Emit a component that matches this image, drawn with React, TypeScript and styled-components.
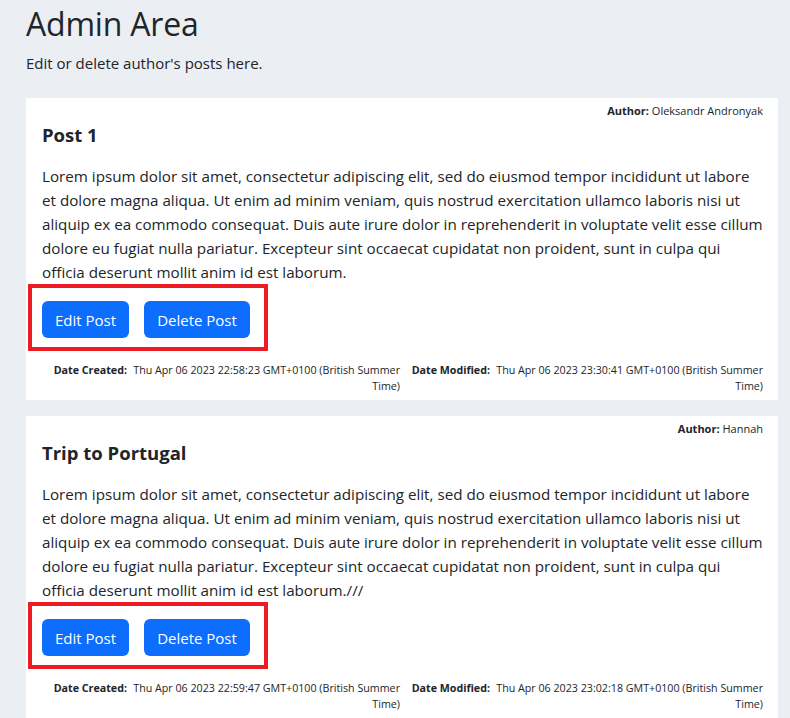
import React from "react";
import styled, { createGlobalStyle } from "styled-components";

const GlobalStyle = createGlobalStyle`
  html, body { margin: 0; padding: 0; }
  body {
    background: #ebeef3;
    font-family: "Segoe UI", "Open Sans", "Noto Sans", sans-serif;
    color: #212529;
  }
`;

const Page = styled.main`
  padding: 0 12px 20px 26px;
`;

const Title = styled.h1`
  margin: 0;
  padding-top: 4px;
  font-size: 32px;
  font-weight: 500;
  line-height: 40px;
  letter-spacing: -0.2px;
`;

const Subtitle = styled.p`
  margin: 7px 0 23px;
  font-size: 15px;
  line-height: 24px;
`;

const Card = styled.section`
  background: #fff;
  padding: 4px 15px 6px 16px;
  margin-bottom: 16px;
`;

const Author = styled.div`
  text-align: right;
  font-size: 11px;
  line-height: 18px;
  color: #212529;
  b { font-weight: 700; }
`;

const PostTitle = styled.h5`
  margin: 3px 0 17px;
  font-size: 18.5px;
  font-weight: 700;
  line-height: 24px;
`;

const Body = styled.p`
  margin: 0 -3px 0 0;
  font-size: 15.2px;
  line-height: 24px;
`;

const ButtonRow = styled.div`
  position: relative;
  display: flex;
  gap: 15px;
  margin-top: 17px;
  &::after {
    content: "";
    position: absolute;
    left: -14px;
    top: -17px;
    width: 240px;
    height: 67px;
    border: 4px solid #ed1c24;
    box-sizing: border-box;
    pointer-events: none;
  }
`;

const Button = styled.button<{ $w: number }>`
  width: ${(p) => p.$w}px;
  height: 37px;
  border: none;
  border-radius: 6px;
  background: #0d6efd;
  color: #fff;
  font-family: inherit;
  font-size: 15px;
  padding: 0;
  cursor: pointer;
`;

const Dates = styled.div`
  display: grid;
  grid-template-columns: 358px 1fr;
  margin-top: 24px;
  font-size: 10.7px;
  line-height: 16px;
`;

const DateCol = styled.div`
  display: flex;
  justify-content: flex-end;
  gap: 5px;
`;

const DateLabel = styled.b`
  white-space: nowrap;
  font-weight: 700;
`;

const DateValue = styled.span`
  text-align: right;
  max-width: 268px;
`;

const LOREM =
  "Lorem ipsum dolor sit amet, consectetur adipiscing elit, sed do eiusmod tempor incididunt ut labore et dolore magna aliqua. Ut enim ad minim veniam, quis nostrud exercitation ullamco laboris nisi ut aliquip ex ea commodo consequat. Duis aute irure dolor in reprehenderit in voluptate velit esse cillum dolore eu fugiat nulla pariatur. Excepteur sint occaecat cupidatat non proident, sunt in culpa qui officia deserunt mollit anim id est laborum.";

const posts = [
  {
    author: "Oleksandr Andronyak",
    title: "Post 1",
    body: LOREM,
    created: "Thu Apr 06 2023 22:58:23 GMT+0100 (British Summer Time)",
    modified: "Thu Apr 06 2023 23:30:41 GMT+0100 (British Summer Time)",
  },
  {
    author: "Hannah",
    title: "Trip to Portugal",
    body: LOREM + "///",
    created: "Thu Apr 06 2023 22:59:47 GMT+0100 (British Summer Time)",
    modified: "Thu Apr 06 2023 23:02:18 GMT+0100 (British Summer Time)",
  },
];

export default function App() {
  return (
    <>
      <GlobalStyle />
      <Page>
        <Title>Admin Area</Title>
        <Subtitle>Edit or delete author's posts here.</Subtitle>
        {posts.map((p) => (
          <Card key={p.title}>
            <Author>
              <b>Author:</b> {p.author}
            </Author>
            <PostTitle>{p.title}</PostTitle>
            <Body>{p.body}</Body>
            <ButtonRow>
              <Button $w={87}>Edit Post</Button>
              <Button $w={106}>Delete Post</Button>
            </ButtonRow>
            <Dates>
              <DateCol>
                <DateLabel>Date Created:</DateLabel>
                <DateValue>{p.created}</DateValue>
              </DateCol>
              <DateCol>
                <DateLabel>Date Modified:</DateLabel>
                <DateValue>{p.modified}</DateValue>
              </DateCol>
            </Dates>
          </Card>
        ))}
      </Page>
    </>
  );
}
